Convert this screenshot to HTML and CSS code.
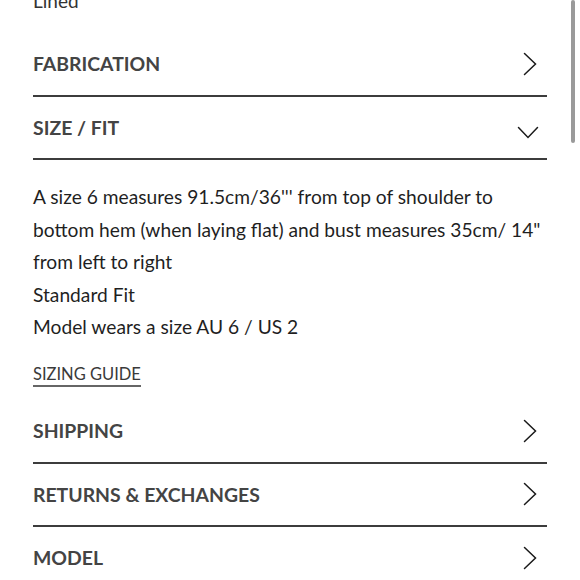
FILE: index.html
```html
<!DOCTYPE html>
<html lang="en">
<head>
<meta charset="utf-8">
<title>Product details</title>
<link rel="stylesheet" href="styles.css">
</head>
<body>
<div class="page">
  <p class="lined">Lined</p>

  <div class="acc-row">
    <span class="acc-title">FABRICATION</span>
    <svg class="chev-right" width="14" height="24" viewBox="0 0 14 24"><polyline points="1.5,1.5 12.5,12 1.5,22.5" /></svg>
  </div>

  <div class="acc-row">
    <span class="acc-title">SIZE / FIT</span>
    <svg class="chev-down" width="22" height="13" viewBox="0 0 22 13"><polyline points="1.5,1.5 11,11.5 20.5,1.5" /></svg>
  </div>

  <div class="panel">
    <p class="desc">A size 6 measures 91.5cm/36''' from top of shoulder to bottom hem (when laying flat) and bust measures 35cm/ 14" from left to right<br>Standard Fit<br>Model wears a size AU 6 / US 2</p>
    <a class="guide" href="#">SIZING GUIDE</a>
  </div>

  <div class="acc-row">
    <span class="acc-title">SHIPPING</span>
    <svg class="chev-right" width="14" height="24" viewBox="0 0 14 24"><polyline points="1.5,1.5 12.5,12 1.5,22.5" /></svg>
  </div>

  <div class="acc-row">
    <span class="acc-title">RETURNS &amp; EXCHANGES</span>
    <svg class="chev-right" width="14" height="24" viewBox="0 0 14 24"><polyline points="1.5,1.5 12.5,12 1.5,22.5" /></svg>
  </div>

  <div class="acc-row">
    <span class="acc-title">MODEL</span>
    <svg class="chev-right" width="14" height="24" viewBox="0 0 14 24"><polyline points="1.5,1.5 12.5,12 1.5,22.5" /></svg>
  </div>
</div>
<div class="scrollbar"></div>
</body>
</html>
```

FILE: styles.css
```css
html, body {
  margin: 0;
  padding: 0;
  background: #ffffff;
  overflow: hidden;
}

body {
  font-family: Lato, "Noto Sans", sans-serif;
  color: #1f1f1f;
}

.page {
  padding: 0 33px;
  margin-top: -15px;
}

.lined {
  margin: 0 0 16px 0;
  font-size: 19px;
  line-height: 32px;
  color: #333;
}

.acc-row {
  display: flex;
  align-items: center;
  justify-content: space-between;
  height: 61.5px;
  border-bottom: 2px solid #3c3c3c;
}

.acc-title {
  font-size: 19.4px;
  font-weight: 700;
  color: #444444;
}

.acc-row svg polyline {
  fill: none;
  stroke: #1a1a1a;
  stroke-width: 1.5;
  stroke-linecap: round;
  stroke-linejoin: miter;
}

.chev-right {
  margin-right: 10px;
}

.chev-down {
  margin-right: 8px;
  margin-top: 10px;
}

.panel {
  padding-top: 21px;
  height: 219px;
}

.desc {
  margin: 0;
  font-size: 19.2px;
  line-height: 32.5px;
  color: #1f1f1f;
}

.guide {
  display: inline-block;
  margin-top: 20px;
  font-size: 16.5px;
  line-height: 20px;
  color: #3a3a3a;
  text-decoration: none;
  border-bottom: 2px solid #666;
  padding-bottom: 1px;
}

.scrollbar {
  position: fixed;
  top: 0;
  right: 5px;
  width: 4px;
  height: 143px;
  border-radius: 2px;
  background: #9a9a9a;
}
```
